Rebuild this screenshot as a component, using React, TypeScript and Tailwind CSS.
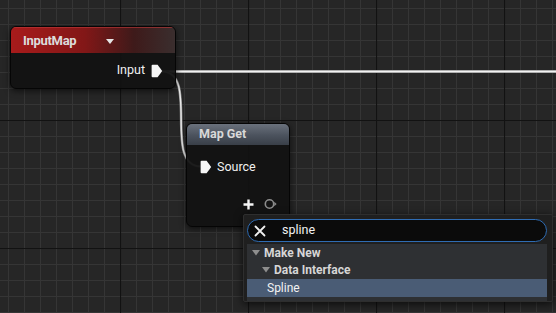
import React from "react";

function Grid() {
  return (
    <svg className="absolute inset-0" width="556" height="313">
      <defs>
        <pattern id="minor" x="8" y="8" width="16" height="16" patternUnits="userSpaceOnUse">
          <path d="M0.5 0 V16 M0 0.5 H16" stroke="#353535" strokeWidth="1" fill="none" />
        </pattern>
        <pattern id="major" x="120" y="120" width="128" height="128" patternUnits="userSpaceOnUse">
          <path d="M0.5 0 V128 M0 0.5 H128" stroke="#121212" strokeWidth="1.2" fill="none" />
        </pattern>
      </defs>
      <rect width="556" height="313" fill="#262626" />
      <rect width="556" height="313" fill="url(#minor)" />
      <rect width="556" height="313" fill="url(#major)" />
    </svg>
  );
}

function Wires() {
  return (
    <svg className="absolute inset-0" width="556" height="313">
      <path d="M162 71.5 H556" stroke="#9a9a9a" strokeWidth="3" fill="none" />
      <path d="M162 71.5 H556" stroke="#f2f2f2" strokeWidth="1.6" fill="none" />
      <path d="M162 71.5 C 200 71.5, 162 166.5, 201 166.5" stroke="#8a8a8a" strokeWidth="2.6" fill="none" />
      <path d="M162 71.5 C 200 71.5, 162 166.5, 201 166.5" stroke="#e8e8e8" strokeWidth="1.4" fill="none" />
    </svg>
  );
}

function ExecPin() {
  return (
    <svg width="12" height="14" viewBox="0 0 12 14">
      <path d="M1.6 0.8 H6.6 L11.2 7 L6.6 13.2 H1.6 Q0.6 13.2 0.6 12.2 V1.8 Q0.6 0.8 1.6 0.8 Z" fill="#f6f6f6" />
    </svg>
  );
}

function CirclePin() {
  return (
    <svg width="13" height="12" viewBox="0 0 13 12">
      <circle cx="5.5" cy="6" r="4.2" stroke="#8c8c8c" strokeWidth="1.6" fill="none" />
      <path d="M10.3 3.8 L12.6 6 L10.3 8.2 Z" fill="#8c8c8c" />
    </svg>
  );
}

function Plus() {
  return (
    <svg width="11" height="11" viewBox="0 0 11 11">
      <path d="M5.5 0.5 V10.5 M0.5 5.5 H10.5" stroke="#f6f6f6" strokeWidth="2.4" />
    </svg>
  );
}

export default function App() {
  const font = { fontFamily: "Roboto, 'Noto Sans', sans-serif" };
  return (
    <div className="relative w-[556px] h-[313px] overflow-hidden bg-[#262626]" style={font}>
      <Grid />
      <Wires />

      {/* InputMap node */}
      <div className="absolute left-[10px] top-[26px] w-[166px] h-[63px] rounded-[6px] bg-[#121212]/95 border border-[#050505] shadow-[0_2px_6px_rgba(0,0,0,0.6)] flex flex-col overflow-hidden">
        <div className="h-[26px] flex items-center pl-[12px] bg-[linear-gradient(90deg,#a81b1b_0%,#821717_45%,#3e1a1a_75%,#3a2e2e_100%)] border-t border-[#c03a3a]/60">
          <span className="text-[13px] font-bold text-[#dcdcdc] tracking-[-0.3px]">InputMap</span>
          <svg className="ml-[30px] mt-[2px]" width="8" height="5" viewBox="0 0 8 5">
            <path d="M0 0 H8 L4 5 Z" fill="#e6e6e6" />
          </svg>
        </div>
        <div className="flex-1 flex items-center justify-end pr-[12px] gap-[6px]">
          <span className="text-[12.5px] text-[#f0f0f0]">Input</span>
          <ExecPin />
        </div>
      </div>

      {/* Map Get node */}
      <div className="absolute left-[186px] top-[123px] w-[104px] h-[104px] rounded-[6px] bg-[#121212]/95 border border-[#050505] shadow-[0_2px_6px_rgba(0,0,0,0.6)] flex flex-col overflow-hidden">
        <div className="h-[21px] flex items-center pl-[12px] bg-[linear-gradient(180deg,#6a717c_0%,#4b525d_55%,#393f48_100%)]">
          <span className="text-[12.5px] font-bold text-[#d8d8d8]">Map Get</span>
        </div>
        <div className="flex flex-col flex-1 pt-[14px] pl-[13px]">
          <div className="flex items-center gap-[5px] h-[16px]">
            <ExecPin />
            <span className="text-[12.5px] text-[#f0f0f0]">Source</span>
          </div>
          <div className="flex items-center justify-end gap-[10px] mt-[23px] pr-[12px]">
            <Plus />
            <CirclePin />
          </div>
        </div>
      </div>

      {/* Dropdown menu */}
      <div className="absolute left-[243px] top-[214px] w-[310px] h-[88px] bg-[#1f1f1f] border border-[#2e2e2e] rounded-[2px] shadow-[0_2px_8px_rgba(0,0,0,0.7)] flex flex-col pl-[3px] pr-[5px] pt-[4px]">
        <div className="h-[23px] rounded-full border-[1.5px] border-[#2f6cb3] bg-[#0b0b0b] flex items-center pl-[6px]">
          <svg width="12" height="12" viewBox="0 0 12 12">
            <path d="M1.5 1.5 L10.5 10.5 M10.5 1.5 L1.5 10.5" stroke="#f0f0f0" strokeWidth="1.8" strokeLinecap="round" />
          </svg>
          <span className="ml-[16px] text-[12.5px] text-[#f2f2f2]">spline</span>
        </div>
        <div className="mt-[2px] bg-[#2e3033] flex flex-col pb-[4px]">
          <div className="h-[17px] flex items-center pl-[5px] gap-[4px]">
            <svg width="8" height="6" viewBox="0 0 8 6"><path d="M0 0 H8 L4 5.5 Z" fill="#8e8e8e" /></svg>
            <span className="text-[12px] font-bold text-[#d6d6d6]">Make New</span>
          </div>
          <div className="h-[18px] flex items-center pl-[15px] gap-[4px]">
            <svg width="8" height="6" viewBox="0 0 8 6"><path d="M0 0 H8 L4 5.5 Z" fill="#8e8e8e" /></svg>
            <span className="text-[12px] font-bold text-[#d6d6d6]">Data Interface</span>
          </div>
          <div className="h-[18px] flex items-center pl-[20px] bg-[#4a5c75]">
            <span className="text-[12px] text-[#f2f2f2]">Spline</span>
          </div>
        </div>
      </div>
    </div>
  );
}
